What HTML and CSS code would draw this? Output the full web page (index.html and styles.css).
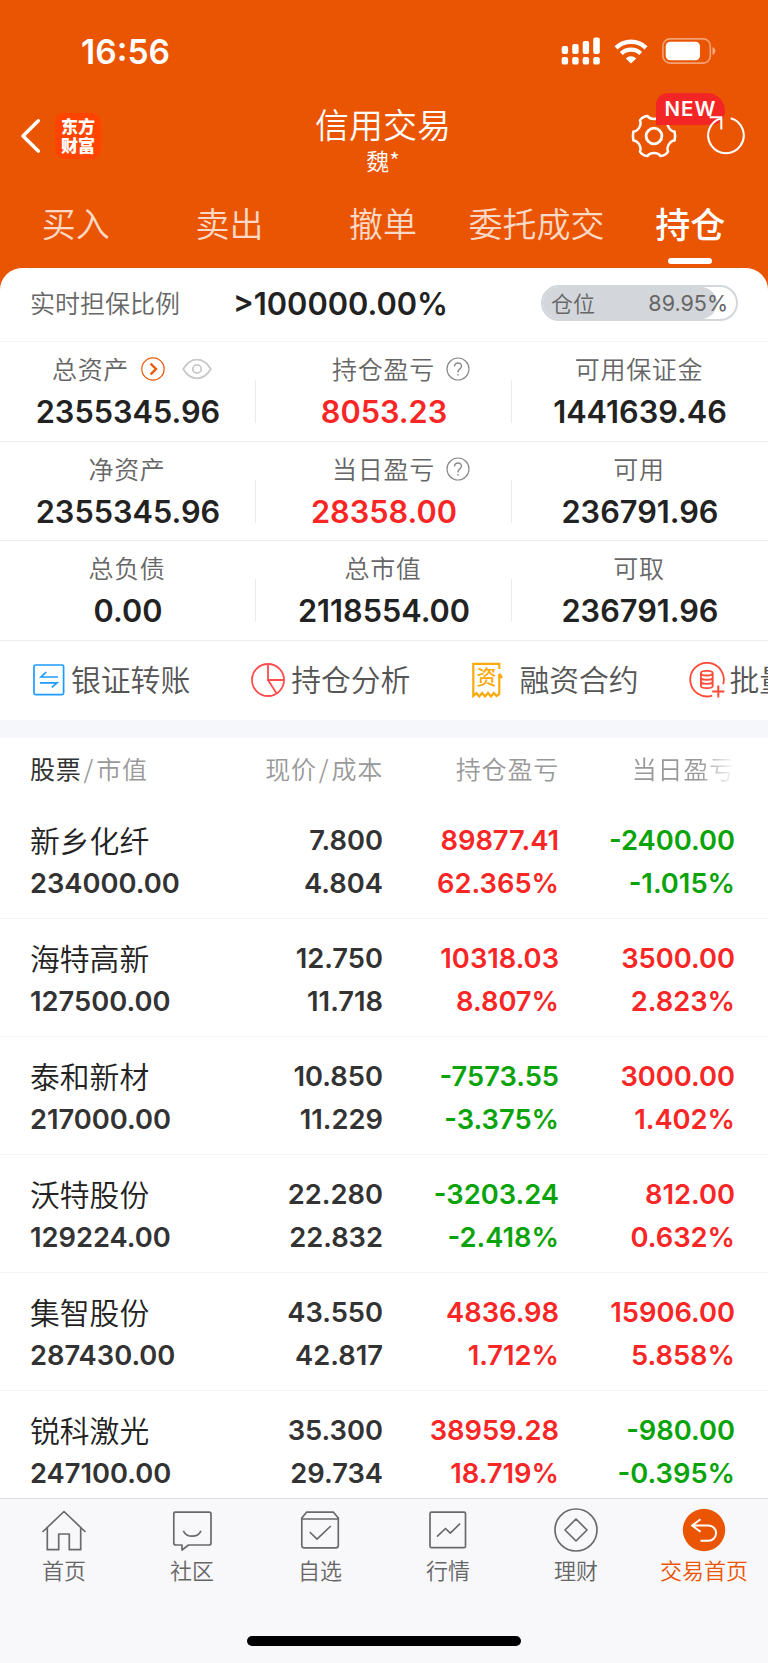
FILE: index.html
```
<!DOCTYPE html>
<html lang="zh-CN">
<head>
    <meta charset="UTF-8">
    <meta name="viewport" content="width=device-width, initial-scale=1.0">
    <title>信用交易</title>
    <link rel="stylesheet" href="styles.css">
</head>
<body>
    <div class="app">
        <header class="header">
            <div class="status-bar">
                <span class="time">16:56</span>
                <div class="status-icons">
                    <svg class="signal" width="40" height="28" viewBox="0 0 40 28" fill="#fff">
                        <rect x="0.7" y="9" width="6.4" height="8" rx="2"/><rect x="11.2" y="7" width="6.4" height="10" rx="2"/><rect x="21.7" y="4" width="6.4" height="13" rx="2"/><rect x="32.2" y="0.5" width="6.6" height="16.5" rx="2"/>
                        <rect x="0.7" y="20" width="6.4" height="7.6" rx="2.2"/><rect x="11.2" y="20" width="6.4" height="7.6" rx="2.2"/><rect x="21.7" y="20" width="6.4" height="7.6" rx="2.2"/><rect x="32.2" y="20" width="6.6" height="7.6" rx="2.2"/>
                    </svg>
                    <svg class="wifi" width="34" height="25" viewBox="0 0 34 25" fill="none" stroke="#fff">
                        <path d="M2 8.8A21.5 21.5 0 0 1 32 8.8" stroke-width="4.4"/>
                        <path d="M7.3 14.6A14 14 0 0 1 26.7 14.6" stroke-width="4.2"/>
                        <path d="M17 24.6L11.8 19.4A7.6 7.6 0 0 1 22.2 19.4Z" fill="#fff" stroke="none"/>
                    </svg>
                    <svg class="battery" width="54" height="26" viewBox="0 0 54 26">
                        <rect x="0.9" y="0.9" width="47.4" height="24.2" rx="7" fill="none" stroke="#fff" stroke-opacity=".45" stroke-width="1.6"/>
                        <rect x="3.7" y="3.8" width="34.3" height="18.4" rx="4.5" fill="#fff"/>
                        <path d="M50.5 9C54.3 10.4 54.3 15.6 50.5 17Z" fill="#fff" fill-opacity=".5"/>
                    </svg>
                </div>
            </div>
            <div class="nav">
                <div class="nav-left">
                    <svg width="22" height="36" viewBox="0 0 22 36" fill="none" stroke="#fff" stroke-width="3.6" stroke-linecap="round" stroke-linejoin="round"><path d="M18.3 2.8L3 18L18.3 33"/></svg>
                    <div class="logo">东方<br>财富</div>
                </div>
                <div class="nav-title">
                    <h1>信用交易</h1>
                    <p>魏*</p>
                </div>
                <div class="nav-right">
                    <div class="settings">
                        <svg width="46" height="46" viewBox="-23 -23 46 46" fill="none" stroke="#fff" stroke-width="2.5" stroke-linejoin="round">
                            <path d="M6.5 20C4 16-4 16-6.5 20Q-11.5 19.5-14.1 15.6C-11.9 11.5-15.9 4.5-20.6 4.4Q-21.6 0-20.6-4.4C-15.9-4.5-11.9-11.5-14.1-15.6Q-11.5-19.5-6.5-20C-4-16 4-16 6.5-20Q11.5-19.5 14.1-15.6C11.9-11.5 15.9-4.5 20.6-4.4Q21.6 0 20.6 4.4C15.9 4.5 11.9 11.5 14.1 15.6Q11.5 19.5 6.5 20Z"/>
                            <circle r="7.9" stroke-width="2.8"/>
                        </svg>
                        <span class="badge">NEW</span>
                    </div>
                    <svg class="refresh" width="42" height="42" viewBox="0 0 42 42" fill="none" stroke="#fff" stroke-width="2">
                        <path d="M25.7 3.2A17.8 17.8 0 1 1 16.2 3.2"/>
                        <path d="M4.5 2.2H16.3V14.5"/>
                    </svg>
                </div>
            </div>
            <nav class="tabs">
                <span>买入</span>
                <span>卖出</span>
                <span>撤单</span>
                <span>委托成交</span>
                <span class="active">持仓</span>
            </nav>
        </header>

        <main class="main">
            <section class="ratio">
                <span class="ratio-label">实时担保比例</span>
                <span class="ratio-value">&gt;100000.00%</span>
                <div class="position">
                    <div class="position-fill" style="width: 89.95%"></div>
                    <span>仓位</span>
                    <span class="position-num">89.95%</span>
                </div>
            </section>

            <section class="assets">
                <div class="asset">
                    <p class="asset-label with-icons">总资产
                        <svg class="go" width="24" height="24" viewBox="0 0 24 24" fill="none" stroke="#ee5a0a"><circle cx="12" cy="12" r="11.2" stroke-width="1.2"/><path d="M9.6 6.6L15 12L9.6 17.4" stroke-width="2.4"/></svg>
                        <svg class="eye" width="30" height="22" viewBox="0 0 30 22" fill="none" stroke="#c8c8c8" stroke-width="1.8"><path d="M1.2 11C8.5-1.4 21.5-1.4 28.8 11C21.5 23.4 8.5 23.4 1.2 11Z"/><circle cx="15" cy="11" r="4.2"/></svg>
                    </p>
                    <p class="asset-value">2355345.96</p>
                </div>
                <div class="asset">
                    <p class="asset-label with-help">持仓盈亏
                        <svg class="help" width="24" height="24" viewBox="0 0 24 24" fill="none" stroke="#8a8a8a" stroke-width="1.2"><circle cx="12" cy="12" r="11"/><path d="M8.5 9.6C8.5 4.8 15.5 4.8 15.5 9.2C15.5 11.8 12 12 12 14.8V15.6M12 17V18.6" stroke-width="1.4"/></svg>
                    </p>
                    <p class="asset-value red">8053.23</p>
                </div>
                <div class="asset">
                    <p class="asset-label">可用保证金</p>
                    <p class="asset-value">1441639.46</p>
                </div>
                <div class="asset">
                    <p class="asset-label">净资产</p>
                    <p class="asset-value">2355345.96</p>
                </div>
                <div class="asset">
                    <p class="asset-label with-help">当日盈亏
                        <svg class="help" width="24" height="24" viewBox="0 0 24 24" fill="none" stroke="#8a8a8a" stroke-width="1.2"><circle cx="12" cy="12" r="11"/><path d="M8.5 9.6C8.5 4.8 15.5 4.8 15.5 9.2C15.5 11.8 12 12 12 14.8V15.6M12 17V18.6" stroke-width="1.4"/></svg>
                    </p>
                    <p class="asset-value red">28358.00</p>
                </div>
                <div class="asset">
                    <p class="asset-label">可用</p>
                    <p class="asset-value">236791.96</p>
                </div>
                <div class="asset">
                    <p class="asset-label">总负债</p>
                    <p class="asset-value">0.00</p>
                </div>
                <div class="asset">
                    <p class="asset-label">总市值</p>
                    <p class="asset-value">2118554.00</p>
                </div>
                <div class="asset">
                    <p class="asset-label">可取</p>
                    <p class="asset-value">236791.96</p>
                </div>
            </section>

            <section class="quick">
                <div class="quick-item">
                    <svg width="32" height="32" viewBox="0 0 32 32" fill="none" stroke="#1e9bff" stroke-width="1.7"><rect x="1" y="1" width="29.6" height="29.6" rx="1.5"/><path d="M25 13H8L13.2 8M7 18.8H24L18.8 23.4"/></svg>
                    <span>银证转账</span>
                </div>
                <div class="quick-item">
                    <svg width="34" height="34" viewBox="0 0 34 34" fill="none" stroke="#ff4d4d" stroke-width="1.8"><circle cx="17" cy="17" r="16"/><path d="M17 1V17H33M17 17L25.5 30.3"/></svg>
                    <span>持仓分析</span>
                </div>
                <div class="quick-item contract">
                    <div class="contract-icon">
                        <svg width="32" height="36" viewBox="0 0 32 36" fill="none" stroke="#fca90b" stroke-width="2.2"><path d="M28.3 7V1.9H2.3V34L5.5 31.2L8.2 34.5L11.2 31L14 34.5L17 31L20 34.5L22.8 31L25.5 34L28.3 32V12.2"/><path d="M28.3 11.8L31 16" stroke-width="2.6"/></svg>
                        <b>资</b>
                    </div>
                    <span>融资合约</span>
                </div>
                <div class="quick-item batch">
                    <svg width="36" height="36" viewBox="0 0 36 36" fill="none" stroke="#ff4a38" stroke-width="1.8"><path d="M23.2 33.6A16.8 16.8 0 1 1 34.2 22.2"/><ellipse cx="17.8" cy="11.2" rx="5.9" ry="2.3"/><path d="M11.9 11.2V23.8C11.9 27 23.7 27 23.7 23.8V11.2M11.9 15.4C11.9 18.5 23.7 18.5 23.7 15.4M11.9 19.6C11.9 22.7 23.7 22.7 23.7 19.6"/><path d="M23.2 29.6H35.4M29.3 23.6V35.6" stroke-width="2"/></svg>
                    <span>批量</span>
                </div>
            </section>

            <section class="holdings">
                <div class="row row-head">
                    <div><b>股票</b><i>/</i>市值</div>
                    <div>现价<i>/</i>成本</div>
                    <div>持仓盈亏</div>
                    <div class="fade">当日盈亏</div>
                </div>
                <div class="row">
                    <div><p class="name">新乡化纤</p><p>234000.00</p></div>
                    <div><p>7.800</p><p>4.804</p></div>
                    <div class="red"><p>89877.41</p><p>62.365%</p></div>
                    <div class="green"><p>-2400.00</p><p>-1.015%</p></div>
                </div>
                <div class="row">
                    <div><p class="name">海特高新</p><p>127500.00</p></div>
                    <div><p>12.750</p><p>11.718</p></div>
                    <div class="red"><p>10318.03</p><p>8.807%</p></div>
                    <div class="red"><p>3500.00</p><p>2.823%</p></div>
                </div>
                <div class="row">
                    <div><p class="name">泰和新材</p><p>217000.00</p></div>
                    <div><p>10.850</p><p>11.229</p></div>
                    <div class="green"><p>-7573.55</p><p>-3.375%</p></div>
                    <div class="red"><p>3000.00</p><p>1.402%</p></div>
                </div>
                <div class="row">
                    <div><p class="name">沃特股份</p><p>129224.00</p></div>
                    <div><p>22.280</p><p>22.832</p></div>
                    <div class="green"><p>-3203.24</p><p>-2.418%</p></div>
                    <div class="red"><p>812.00</p><p>0.632%</p></div>
                </div>
                <div class="row">
                    <div><p class="name">集智股份</p><p>287430.00</p></div>
                    <div><p>43.550</p><p>42.817</p></div>
                    <div class="red"><p>4836.98</p><p>1.712%</p></div>
                    <div class="red"><p>15906.00</p><p>5.858%</p></div>
                </div>
                <div class="row">
                    <div><p class="name">锐科激光</p><p>247100.00</p></div>
                    <div><p>35.300</p><p>29.734</p></div>
                    <div class="red"><p>38959.28</p><p>18.719%</p></div>
                    <div class="green"><p>-980.00</p><p>-0.395%</p></div>
                </div>
            </section>
        </main>

        <footer class="tabbar">
            <div class="tabbar-items">
                <div class="tabbar-item">
                    <svg width="46" height="46" viewBox="0 0 46 46"><path d="M1.5 25L23 4.5L44.5 25M6.3 21V42.7H17.7V27H28.3V42.7H39.7V21"/></svg>
                    <span>首页</span>
                </div>
                <div class="tabbar-item">
                    <svg width="46" height="46" viewBox="0 0 46 46"><path d="M6 5.2H40Q42 5.2 42 7.2V36Q42 38 40 38H19.5L13 43V38H6.8Q4.8 38 4.8 36V7.2Q4.8 5.2 6 5.2ZM14.3 23.8C18 31 28.5 31 32 23.8"/></svg>
                    <span>社区</span>
                </div>
                <div class="tabbar-item">
                    <svg width="46" height="46" viewBox="0 0 46 46"><path d="M9.5 5.2H36.5L41.3 11V38.5Q41.3 40.8 39 40.8H7Q4.8 40.8 4.8 38.5V11ZM4.8 12H41.3M12.8 25L20 32.2L33.8 19"/></svg>
                    <span>自选</span>
                </div>
                <div class="tabbar-item">
                    <svg width="46" height="46" viewBox="0 0 46 46"><rect x="5" y="5.2" width="35.5" height="35.5" rx="1.5"/><path d="M12 29.7L20.5 21.5L25.3 26.2L35 16.7"/></svg>
                    <span>行情</span>
                </div>
                <div class="tabbar-item">
                    <svg width="46" height="46" viewBox="0 0 46 46"><circle cx="23" cy="23" r="21"/><path d="M23 12L34 23L23 34L12 23Z"/></svg>
                    <span>理财</span>
                </div>
                <div class="tabbar-item active">
                    <svg width="46" height="46" viewBox="0 0 46 46"><circle class="disc" cx="23" cy="23" r="21.2"/><path d="M19.5 12.3L11 18.5L19.5 24.8M11 18.5H27.5A7.6 7.6 0 0 1 27.5 33.7H19.5"/></svg>
                    <span>交易首页</span>
                </div>
            </div>
            <div class="home-indicator"></div>
        </footer>
    </div>
</body>
</html>
```
FILE: styles.css
```
* {
    margin: 0;
    padding: 0;
    box-sizing: border-box;
}
body {
    font-family: "Noto Sans CJK SC", sans-serif;
    font-weight: 350;
    background-color: #fff;
    color: #333;
}
svg {
    display: block;
    flex-shrink: 0;
}
.app {
    width: 768px;
    height: 1663px;
    display: flex;
    flex-direction: column;
    overflow: hidden;
    background-color: #ea5504;
}
.header {
    height: 268px;
    flex-shrink: 0;
    color: #fff;
}

/* status bar */
.status-bar {
    height: 102px;
    padding: 0 52px 0 81px;
    display: flex;
    align-items: center;
    justify-content: space-between;
}
.time {
    font-family: Inter, sans-serif;
    font-size: 33.6px;
    font-weight: 600;
    padding-top: 1px;
}
.status-icons {
    display: flex;
    align-items: center;
}
.wifi {
    margin: 0 14px 0 13px;
}

/* title bar */
.nav {
    height: 82px;
    display: grid;
    grid-template-columns: 200px 1fr 200px;
}
.nav-left {
    display: flex;
    align-items: center;
    padding: 0 0 14px 20px;
    gap: 13px;
}
.logo {
    width: 46px;
    height: 46px;
    border-radius: 9px;
    background-color: #ff4400;
    font-size: 17px;
    font-weight: 900;
    line-height: 19px;
    text-align: center;
    padding-top: 3px;
}
.nav-title {
    text-align: center;
    padding-right: 2px;
}
.nav-title h1 {
    font-size: 34px;
    font-weight: 350;
    line-height: 44px;
}
.nav-title p {
    font-size: 23px;
    line-height: 28px;
}
.nav-right {
    display: flex;
    align-items: center;
    padding: 0 0 14px 63px;
    gap: 28px;
}
.settings {
    position: relative;
}
.badge {
    position: absolute;
    left: 25px;
    top: -20px;
    width: 69px;
    height: 32px;
    border-radius: 12px 18px 14px 0;
    background-color: #f42525;
    font-family: Inter, sans-serif;
    font-size: 20.5px;
    font-weight: 600;
    letter-spacing: 1px;
    line-height: 32px;
    text-align: center;
}
.refresh {
    position: relative;
}

/* trade tabs */
.tabs {
    height: 84px;
    display: grid;
    grid-template-columns: repeat(5, 1fr);
}
.tabs span {
    display: flex;
    flex-direction: column;
    align-items: center;
    font-size: 34px;
    line-height: 78px;
    color: #fbd9c6;
    margin-left: -2px;
}
.tabs .active {
    color: #fff;
    font-weight: 500;
    font-size: 35px;
}
.tabs .active::after {
    content: "";
    width: 44px;
    height: 6px;
    border-radius: 3px;
    background-color: #fff;
    margin-top: -4px;
}

/* content */
.main {
    flex: 1;
    min-height: 0;
    overflow: hidden;
    background-color: #fff;
    border-radius: 22px 22px 0 0;
}
.ratio {
    height: 74px;
    border-bottom: 1px solid #f3f3f3;
    display: flex;
    align-items: center;
    padding: 0 30px 2px;
}
.ratio-label {
    width: 203px;
    font-size: 25px;
    color: #666;
    margin-top: -4px;
}
.ratio-value {
    font-family: Inter, sans-serif;
    font-size: 30.8px;
    font-weight: 600;
    color: #222;
    flex: 1;
}
.position {
    position: relative;
    width: 197px;
    height: 36px;
    border: 2px solid #d3d6db;
    border-radius: 18px;
    overflow: hidden;
    display: flex;
    align-items: center;
    justify-content: space-between;
    padding: 0 8px;
    margin-top: -1px;
    font-size: 22px;
    color: #666;
}
.position-fill {
    position: absolute;
    left: 0;
    top: 0;
    height: 100%;
    border-radius: 0 16px 16px 0;
    background-color: #d3d6db;
}
.position span {
    position: relative;
    line-height: 32px;
    margin-top: -3px;
}
.position .position-num {
    font-family: Inter, sans-serif;
    font-size: 21.5px;
    font-weight: 400;
    margin-top: 0;
}
.assets {
    display: grid;
    grid-template-columns: repeat(3, 1fr);
    grid-auto-rows: 99.5px;
}
.asset {
    padding-top: 8px;
    border-bottom: 1px solid #ececec;
    text-align: center;
    background: linear-gradient(#ebebeb, #ebebeb) right 38px / 1px 43px no-repeat;
}
.asset:nth-child(3n) {
    background: none;
}
.asset-label {
    display: flex;
    align-items: center;
    justify-content: center;
    padding-right: 2px;
    font-size: 25px;
    letter-spacing: 0.7px;
    line-height: 36px;
    color: #666;
}
.with-icons {
    padding-left: 10px;
}
.go {
    margin: 2px 17px 0 12px;
}
.eye {
    margin-top: 1px;
}
.with-help {
    padding-left: 36px;
}
.help {
    margin: 2px 0 0 11px;
}
.asset-value {
    font-family: Inter, sans-serif;
    font-size: 30.7px;
    font-weight: 600;
    line-height: 52px;
    color: #222;
}
.quick {
    height: 79px;
    display: flex;
    align-items: center;
    padding: 0 0 1px 33px;
    overflow: hidden;
}
.quick-item {
    display: flex;
    align-items: center;
    gap: 6px;
    font-size: 29.8px;
    color: #555;
    white-space: nowrap;
    flex-shrink: 0;
    margin-right: 61px;
}
.quick-item span {
    line-height: 40px;
    margin-top: -4px;
}
.contract {
    gap: 16px;
    margin-right: 50px;
}
.contract-icon {
    position: relative;
}
.contract-icon b {
    position: absolute;
    left: 5px;
    top: 3px;
    font-size: 20px;
    font-weight: 500;
    line-height: 24px;
    color: #fca90b;
}
.batch {
    gap: 5px;
    margin-right: 0;
}

/* holdings table */
.holdings {
    border-top: 18px solid #f6f7fa;
}
.row {
    height: 118px;
    display: grid;
    grid-template-columns: 200px 153px 176px 176px;
    padding: 18px 0 0 30px;
    border-bottom: 1px solid #f3f3f3;
    font-family: Inter, "Noto Sans CJK SC", sans-serif;
    font-size: 27.3px;
    font-weight: 600;
    line-height: 43px;
}
.row div {
    text-align: right;
}
.row div:first-child {
    text-align: left;
}
.row .name {
    font-family: "Noto Sans CJK SC", sans-serif;
    font-size: 29.8px;
    font-weight: 350;
    line-height: 40px;
    padding-bottom: 3px;
    color: #222;
}
.row-head {
    height: 63px;
    padding-top: 9px;
    border-bottom: none;
    font-family: "Noto Sans CJK SC", sans-serif;
    font-size: 25px;
    font-weight: 350;
    letter-spacing: 0.8px;
    color: #999;
}
.row-head b {
    font-weight: 400;
    color: #333;
}
.row-head i {
    font-style: normal;
    margin: 0 2px;
}
.fade {
    -webkit-mask-image: linear-gradient(to right, #000 80%, transparent);
    mask-image: linear-gradient(to right, #000 80%, transparent);
}
.red {
    color: #f92626;
}
.green {
    color: #0aa30a;
}

/* bottom bar */
.tabbar {
    height: 165px;
    flex-shrink: 0;
    background-color: #f8f8fa;
    border-top: 1px solid #dedee0;
}
.tabbar-items {
    height: 137px;
    display: grid;
    grid-template-columns: repeat(6, 1fr);
}
.tabbar-item {
    display: flex;
    flex-direction: column;
    align-items: center;
    padding-top: 8px;
    font-size: 22px;
    line-height: 32px;
    color: #666;
}
.tabbar-item svg {
    fill: none;
    stroke: #6a6a6a;
    stroke-width: 1.7;
    stroke-linejoin: round;
}
.tabbar-item.active {
    color: #ea5504;
}
.tabbar-item.active svg {
    stroke: #fff;
    stroke-width: 2;
}
.tabbar-item .disc {
    fill: #ea5504;
    stroke: none;
}
.home-indicator {
    width: 274px;
    height: 10px;
    border-radius: 5px;
    background-color: #000;
    margin: 0 auto;
}
```
